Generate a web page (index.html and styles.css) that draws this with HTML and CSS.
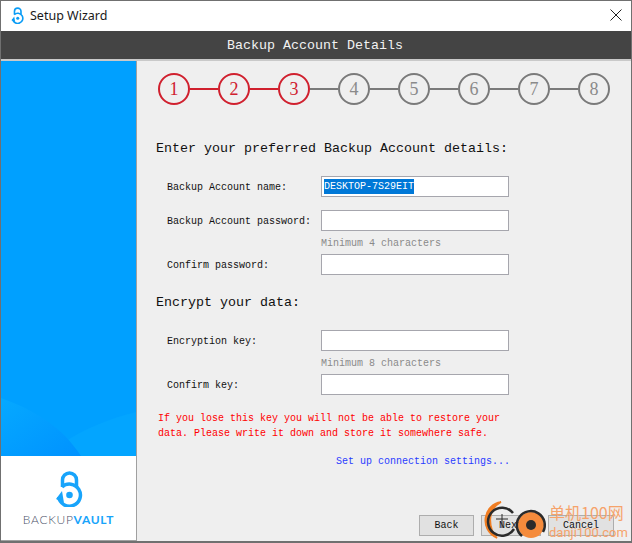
FILE: index.html
```html
<!DOCTYPE html>
<html lang="en">
<head>
    <meta charset="UTF-8">
    <title>Setup Wizard</title>
    <link rel="stylesheet" href="styles.css">
</head>
<body>
    <div class="window">
        <div class="titlebar">
            <svg class="app-icon" viewBox="0 0 28 36" width="13" height="17">
                <path d="M7.500 16V9a7 7 0 0 1 14 0v7" fill="none" stroke="#0a9cf5" stroke-width="3.500"/>
                <path d="M3.600 26A11 11 0 1 0 7 16" fill="none" stroke="#0a9cf5" stroke-width="3.500"/>
                <path d="M1 28l6-8 2 12z" fill="#0a9cf5"/>
                <circle cx="14.500" cy="24" r="3.300" fill="#0a9cf5"/>
            </svg>
            <span class="title">Setup Wizard</span>
            <svg class="close" viewBox="0 0 12 12" width="12" height="12">
                <path d="M.5.5l11 11M11.500.5l-11 11" stroke="#222" stroke-width="1" fill="none"/>
            </svg>
        </div>
        <div class="header">Backup Account Details</div>
        <div class="main">
            <div class="side">
                <div class="side-blue">
                    <svg class="waves" viewBox="0 0 135 120" preserveAspectRatio="none">
                        <defs>
                            <linearGradient id="wave" x1="0" y1="0" x2="1" y2="1">
                                <stop offset="0" stop-color="#05a9ff"/>
                                <stop offset="1" stop-color="#0092ff"/>
                            </linearGradient>
                        </defs>
                        <path d="M135 76C110 82 85 92 65 105L80 120H135z" fill="#03a5ff"/>
                        <path d="M0 62C35 75 60 90 80 120H0z" fill="url(#wave)"/>
                    </svg>
                </div>
                <div class="side-logo">
                    <svg class="logo" viewBox="0 0 28 36" width="28" height="36">
                        <path d="M7.500 16V9a7 7 0 0 1 14 0v7" fill="none" stroke="#18a4fb" stroke-width="3.500"/>
                        <path d="M3.600 26A11 11 0 1 0 7 16" fill="none" stroke="#18a4fb" stroke-width="3.500"/>
                        <path d="M1 28l6-8 2 12z" fill="#18a4fb"/>
                        <circle cx="14.500" cy="24" r="3.300" fill="#18a4fb"/>
                    </svg>
                    <div class="brand">BACKUP<b>VAULT</b></div>
                </div>
            </div>
            <div class="content">
                <div class="steps">
                    <span class="step done">1</span><i class="link done"></i>
                    <span class="step done">2</span><i class="link done"></i>
                    <span class="step done">3</span><i class="link"></i>
                    <span class="step">4</span><i class="link"></i>
                    <span class="step">5</span><i class="link"></i>
                    <span class="step">6</span><i class="link"></i>
                    <span class="step">7</span><i class="link"></i>
                    <span class="step">8</span>
                </div>

                <h2 class="heading first">Enter your preferred Backup Account details:</h2>
                <div class="row">
                    <label>Backup Account name:</label>
                    <div class="field"><span class="selected">DESKTOP-7S29EIT</span></div>
                </div>
                <div class="row gap">
                    <label>Backup Account password:</label>
                    <div class="field"></div>
                </div>
                <div class="hint">Minimum 4 characters</div>
                <div class="row">
                    <label>Confirm password:</label>
                    <div class="field"></div>
                </div>

                <h2 class="heading second">Encrypt your data:</h2>
                <div class="row">
                    <label>Encryption key:</label>
                    <div class="field"></div>
                </div>
                <div class="hint">Minimum 8 characters</div>
                <div class="row">
                    <label>Confirm key:</label>
                    <div class="field"></div>
                </div>

                <p class="warning">If you lose this key you will not be able to restore your<br>data. Please write it down and store it somewhere safe.</p>
                <div class="settings">Set up connection settings...</div>

                <div class="buttons">
                    <button class="back">Back</button>
                    <button class="next">Next</button>
                    <button class="cancel">Cancel</button>
                </div>
            </div>
        </div>

        <!-- watermark on top of the screenshot -->
        <div class="watermark">
            <svg viewBox="0 0 66 48" width="66" height="48">
                <path d="M19 3C2 5-4 30 15 39C7 30 4 11 19 3z" fill="#f07d22" stroke="#f07d22" stroke-width="1.500"/>
                <path d="M31 14A14 14 0 1 0 32 30" fill="none" stroke="#2b2b2b" stroke-width="2.500"/>
                <path d="M20 15v14M14 20h12" fill="none" stroke="#2b2b2b" stroke-width="1"/>
                <circle cx="49" cy="26" r="13" fill="#f58b3c"/>
                <path d="M40 37A14 14 0 1 1 61 33" fill="none" stroke="#2b2b2b" stroke-width="2.500"/>
                <circle cx="49" cy="26" r="5" fill="#2b2b2b"/>
            </svg>
            <div class="wm-text"><span class="wm-cn">单机100网</span><span class="wm-en">danji100.com</span></div>
        </div>
    </div>
</body>
</html>
```

FILE: styles.css
```css
html, body {
    margin: 0;
    padding: 0;
}
body {
    font-family: "Liberation Mono", monospace;
    font-size: 10px;
    color: #111;
}
.window {
    position: relative;
    width: 632px;
    height: 543px;
    box-sizing: border-box;
    border: 1px solid #707070;
    border-bottom-width: 2px;
    background: #efefef;
    display: flex;
    flex-direction: column;
    overflow: hidden;
}
.titlebar {
    height: 30px;
    box-sizing: border-box;
    flex: none;
    background: #fff;
    display: flex;
    align-items: center;
    padding: 0 9px 2px 10px;
}
.app-icon {
    margin-right: 6px;
}
.title {
    font-family: "Noto Sans", sans-serif;
    font-size: 12.5px;
    color: #1a1a1a;
    flex: 1;
}
.header {
    height: 27px;
    flex: none;
    background: #444;
    color: #f2f2f2;
    font-size: 13.33px;
    line-height: 28px;
    text-align: center;
    padding: 1px 2px 0 0;
    border-bottom: 2px solid #c9c9c9;
}
.main {
    flex: 1;
    display: flex;
    min-height: 0;
}
.side {
    width: 135px;
    flex: none;
    border-right: 1px solid #a0a0a0;
    border-bottom: 1px solid #a0a0a0;
    display: flex;
    flex-direction: column;
    background: #fff;
}
.side-blue {
    height: 395px;
    background: #00a0ff;
    position: relative;
    overflow: hidden;
}
.waves {
    position: absolute;
    left: 0;
    bottom: 0;
    width: 100%;
    height: 120px;
}
.side-logo {
    flex: 1;
    display: flex;
    flex-direction: column;
    align-items: center;
    padding-top: 15px;
}
.brand {
    margin-top: 5px;
    font-family: "Lato", sans-serif;
    font-size: 12px;
    font-weight: 300;
    letter-spacing: 0.7px;
    color: #4a5068;
}
.brand b {
    font-weight: 700;
    color: #18a4fb;
}
.content {
    flex: 1;
    padding: 12px 0 0 19px;
    position: relative;
}
.steps {
    display: flex;
    align-items: center;
    margin-left: 2px;
}
.step {
    width: 28px;
    height: 28px;
    border: 2px solid #7a7a7a;
    border-radius: 50%;
    display: flex;
    align-items: center;
    justify-content: center;
    font-family: "Liberation Serif", serif;
    font-size: 18px;
    color: #8a8a8a;
    flex: none;
}
.step.done {
    border-color: #d0202e;
    color: #d0202e;
}
.link {
    width: 28px;
    height: 2px;
    background: #7a7a7a;
    flex: none;
}
.link.done {
    background: #d0202e;
}
.heading {
    margin: 0;
    font-weight: normal;
    font-size: 13.33px;
    line-height: 16px;
}
.heading.first {
    margin-top: 36px;
    margin-bottom: 19px;
}
.heading.second {
    margin-top: 20px;
    margin-bottom: 19px;
}
.row {
    display: flex;
    align-items: center;
    height: 21px;
    padding-left: 11px;
}
.row.gap {
    margin-top: 13px;
}
.row label {
    width: 154px;
    flex: none;
    padding-top: 1px;
}
.field {
    width: 184px;
    height: 19px;
    border: 1px solid #a6a6ad;
    background: #fff;
    display: flex;
    align-items: center;
    padding-left: 2px;
}
.selected {
    background: #0078d7;
    color: #fff;
    line-height: 15px;
}
.hint {
    margin: 7px 0 5px 165px;
    line-height: 11px;
    color: #8a8a8a;
}
.warning {
    margin: 16px 0 0 2px;
    line-height: 15px;
    color: #f00;
}
.settings {
    margin: 15px 0 0 180px;
    line-height: 12px;
    color: #2a3cff;
}
.buttons {
    position: absolute;
    right: 17px;
    bottom: 5px;
    display: flex;
    gap: 7px;
}
button {
    font-family: "Liberation Mono", monospace;
    font-size: 10px;
    height: 21px;
    border: 1px solid #adadad;
    background: #e1e1e1;
    color: #111;
    padding: 0;
}
.back {
    width: 55px;
}
.next {
    width: 60px;
}
.cancel {
    width: 66px;
}
.watermark {
    position: absolute;
    left: 481px;
    top: 498px;
    display: flex;
    pointer-events: none;
}
.wm-text {
    display: flex;
    flex-direction: column;
    color: #f6a36b;
    margin: 5px 0 0 1px;
}
.wm-cn {
    font-family: "Noto Sans CJK SC", sans-serif;
    font-size: 16px;
    line-height: 16px;
    white-space: nowrap;
}
.wm-en {
    font-family: "Roboto", sans-serif;
    font-size: 13px;
    line-height: 14px;
    margin-top: 6px;
    white-space: nowrap;
}
```
